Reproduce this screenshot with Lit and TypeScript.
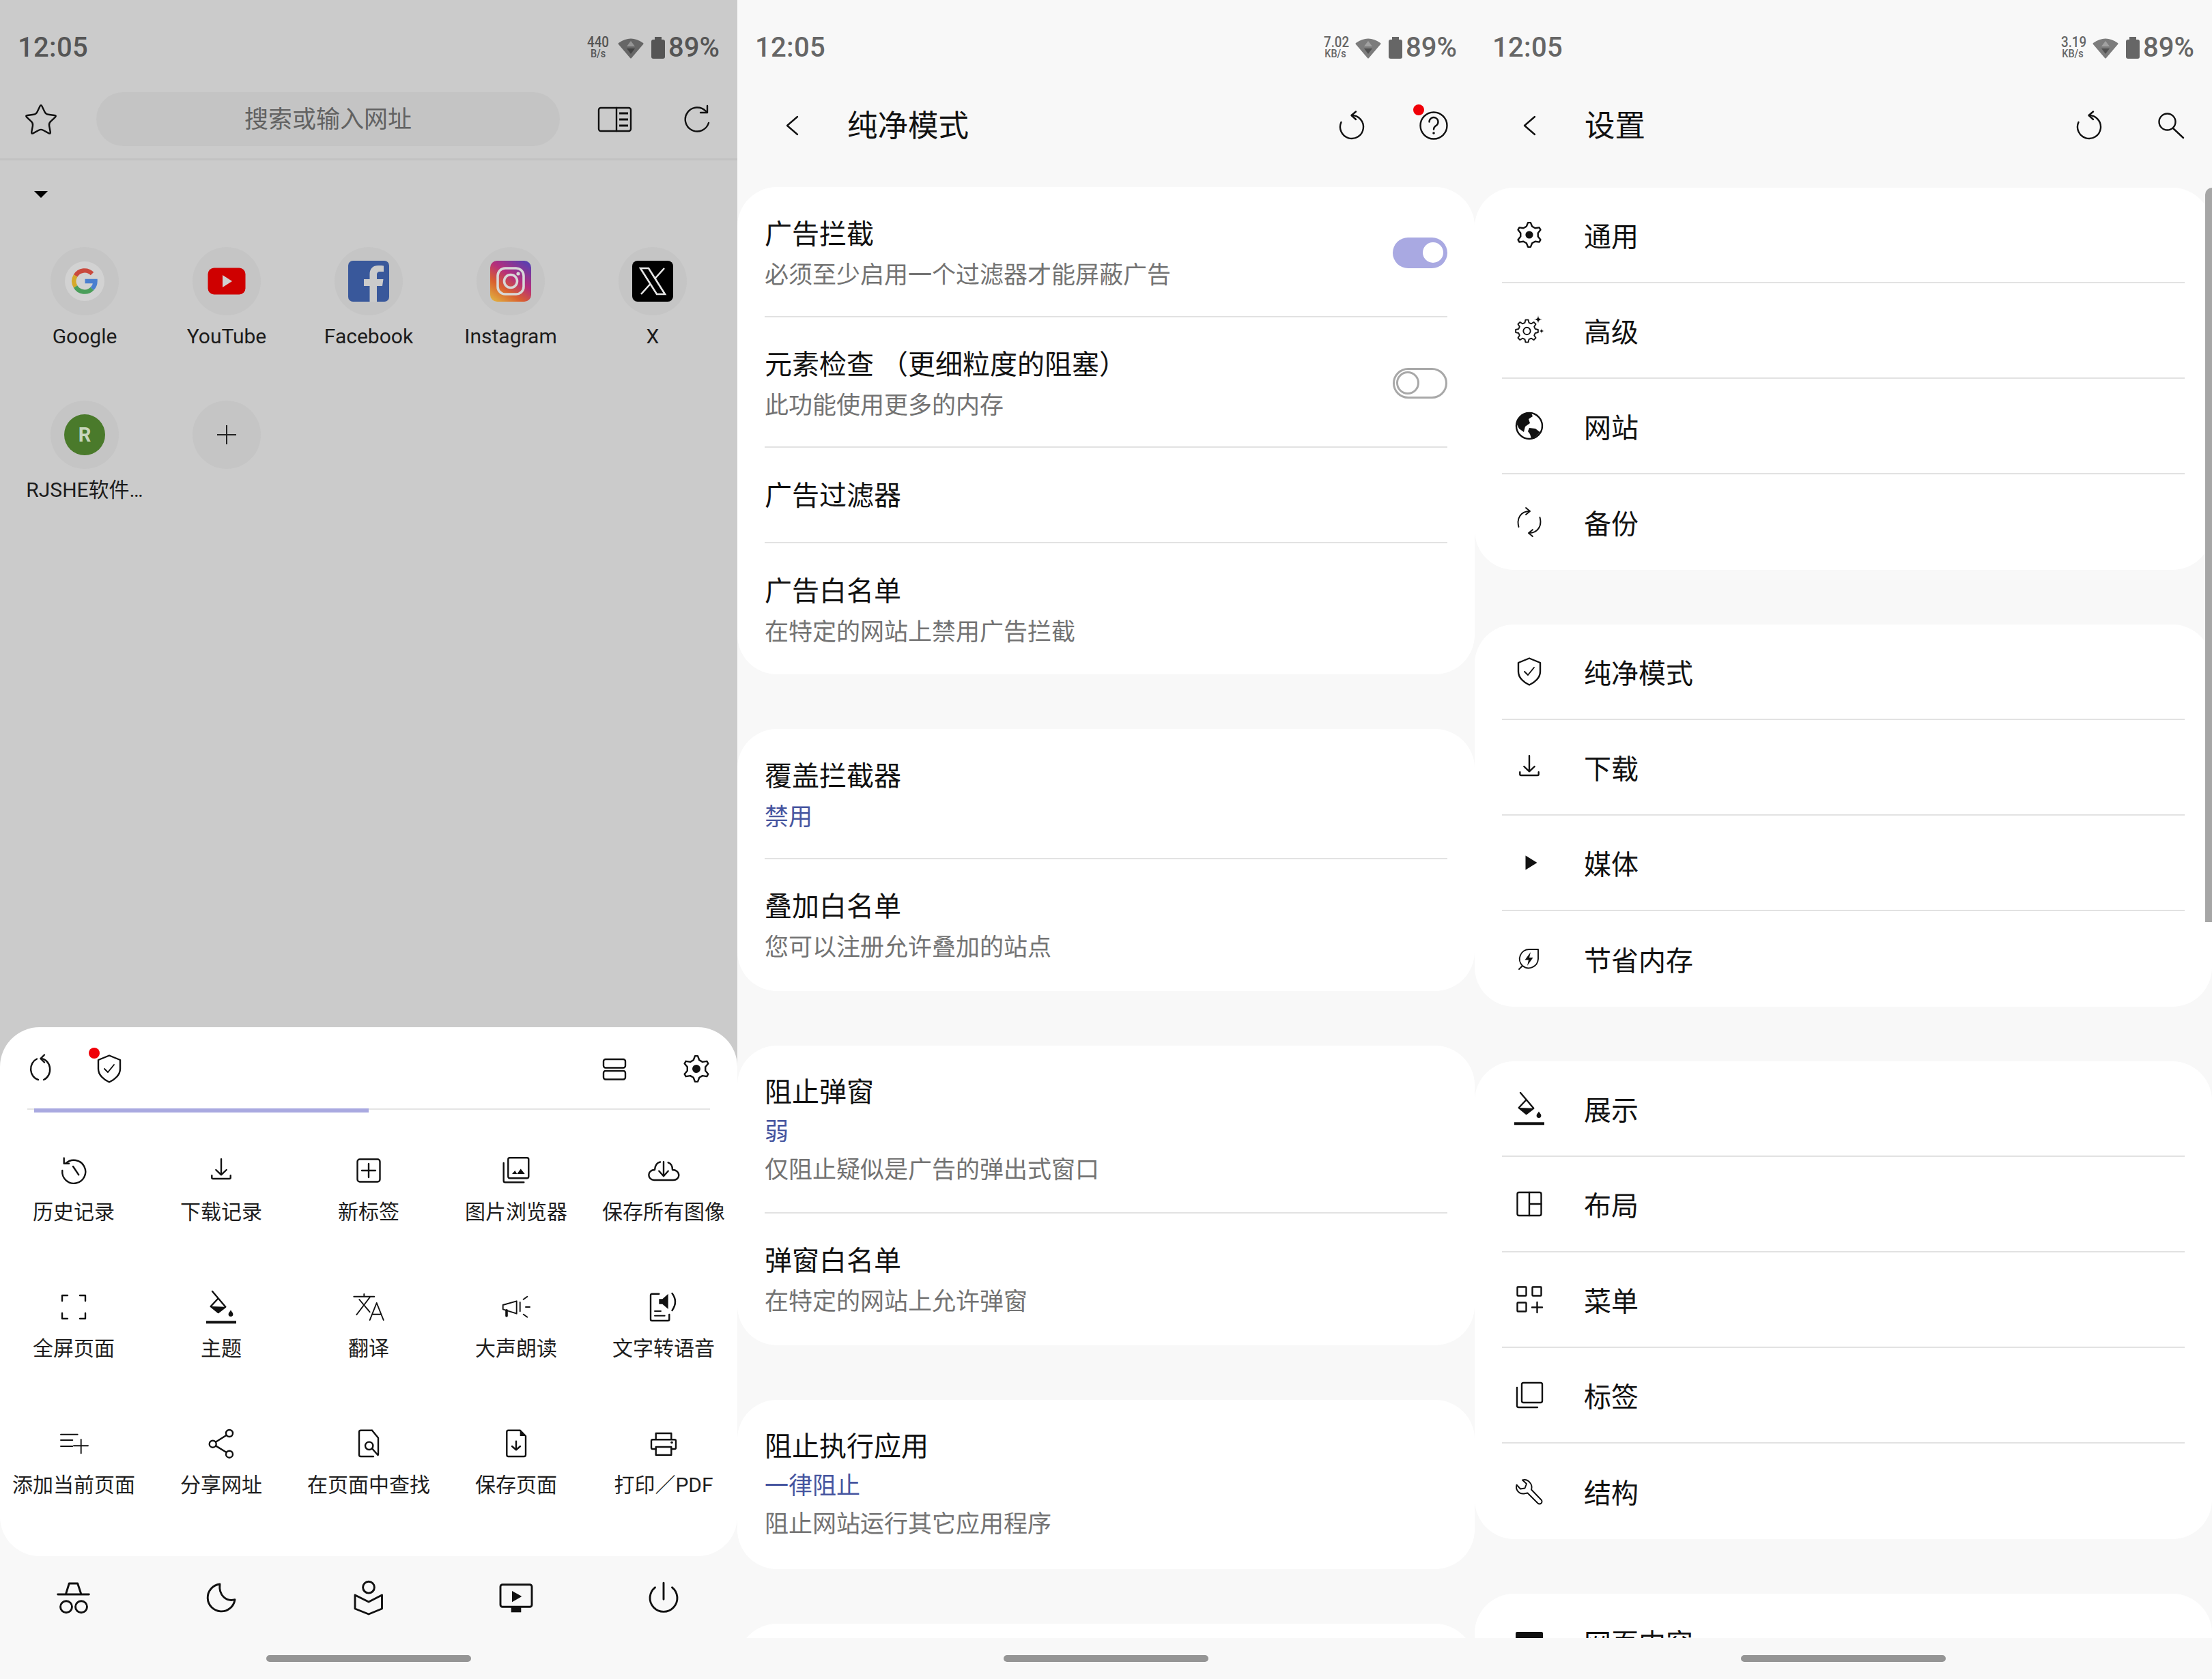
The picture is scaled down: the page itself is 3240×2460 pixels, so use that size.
import { LitElement, css, html, svg, TemplateResult } from 'lit';
import { customElement } from 'lit/decorators.js';

// polygon points, used for the gears and the star
function gearPath(cx: number, cy: number, R: number, r: number, n: number, tip = 0.36, base = 0.66): string {
  const pts: string[] = [];
  const p = (rad: number, a: number) => `${(cx + rad * Math.cos(a)).toFixed(2)} ${(cy + rad * Math.sin(a)).toFixed(2)}`;
  for (let i = 0; i < n; i++) {
    const a = (i * 2 * Math.PI) / n - Math.PI / 2;
    const u = Math.PI / n;
    pts.push(p(r, a - u * base), p(R, a - u * tip), p(R, a + u * tip), p(r, a + u * base));
  }
  return 'M' + pts.join('L') + 'Z';
}

function starPath(cx: number, cy: number, R: number, r: number, corner: number): string {
  const pts: [number, number][] = [];
  for (let i = 0; i < 10; i++) {
    const a = (i * Math.PI) / 5 - Math.PI / 2;
    const rad = i % 2 ? r : R;
    pts.push([cx + rad * Math.cos(a), cy + rad * Math.sin(a)]);
  }
  let d = '';
  pts.forEach((pt, i) => {
    const prev = pts[(i + 9) % 10];
    const next = pts[(i + 1) % 10];
    const toward = (from: [number, number], to: [number, number]) => {
      const dx = to[0] - from[0];
      const dy = to[1] - from[1];
      const len = Math.hypot(dx, dy);
      return [from[0] + (dx / len) * corner, from[1] + (dy / len) * corner];
    };
    const a = toward(pt, prev);
    const b = toward(pt, next);
    d += `${i ? 'L' : 'M'}${a[0].toFixed(2)} ${a[1].toFixed(2)}Q${pt[0].toFixed(2)} ${pt[1].toFixed(2)} ${b[0].toFixed(2)} ${b[1].toFixed(2)}`;
  });
  return d + 'Z';
}

const spark = (x: number, y: number, s: number) =>
  `M${x} ${y - s}Q${x} ${y} ${x + s} ${y}Q${x} ${y} ${x} ${y + s}Q${x} ${y} ${x - s} ${y}Q${x} ${y} ${x} ${y - s}Z`;

const paints = svg`
  <path d="M11 1L30.3 23.7M19.7 11.3L30.3 23.7L19.7 32L8.7 23Z"/>
  <path class="f" d="M8.7 23L30.3 23.7L19.7 32Z"/>
  <path class="f" d="M38 28.5C36.5 31 34.6 32.5 34.6 34.6A3.4 3.4 0 0 0 41.4 34.6C41.4 32.5 39.5 31 38 28.5Z"/>
  <path class="f" d="M2 44.3H46V48.3H2Z"/>`;

const shield = svg`
  <path d="M24 4.5L40 11V24C40 33 32 40 24 43.5C16 40 8 33 8 24V11Z"/>
  <path class="thin" d="M17 24L22 29L31 18"/>`;

const download = svg`
  <path d="M24 7.3V30.3M16.3 23L24 30.3L31.7 23M10.3 31.3V34.5Q10.3 36 12 36H36Q37.7 36 37.7 34.5V31.3"/>`;

const paths: Record<string, TemplateResult> = {
  back: svg`<path d="M32 11L17 24L32 37"/>`,
  reset: svg`<path d="M8.5 19A17 17 0 1 0 24 9"/><path d="M30 3.5L23.5 9L30 15"/>`,
  menuReload: svg`<path d="M18 9.5A14 16 0 0 0 20 40"/><path d="M24 9A14 16 0 0 1 28 40"/><path d="M29 3.5L23.5 9L29 14.5"/>`,
  help: svg`<circle cx="24" cy="24" r="19.5"/><path d="M17.5 18.5A6.5 6.5 0 1 1 27.8 23.8C25.2 25.4 24 26.6 24 29.5"/><circle class="f" cx="24" cy="35" r="1.8"/>`,
  search: svg`<circle cx="18.5" cy="18.5" r="12"/><path d="M27 28L42 42"/>`,
  star: svg`<path d=${starPath(24, 26, 24.5, 12, 3.6)}/>`,
  reader: svg`<rect x="1" y="7" width="47" height="34" rx="3"/><path d="M27 7V41"/><path class="bar" d="M31 15H44M31 24H44M31 33H44"/>`,
  refresh: svg`<path d="M41 29A17.5 17.5 0 1 1 37 12"/><path d="M39 4V14H29"/>`,
  layout2: svg`<rect x="8" y="10" width="32" height="12.5" rx="3"/><rect x="8" y="27" width="32" height="12.5" rx="3"/>`,
  gear: svg`<path d=${gearPath(24, 24, 19, 13.5, 6, 0.2, 0.62)}/><circle class="f" cx="24" cy="24" r="6"/>`,
  gearSmall: svg`<path d=${gearPath(24, 24, 18, 13, 6, 0.2, 0.62)}/><circle class="f" cx="24" cy="24" r="5.6"/>`,
  gearSpark: svg`<path class="thin" d=${gearPath(20.5, 25, 16.5, 12.5, 8, 0.32, 0.62)}/><circle class="thin" cx="20.5" cy="25" r="5.2"/><path class="f" d=${spark(37, 8, 6)}/><path class="f" d=${spark(42, 25, 4)}/>`,
  globe: svg`<circle cx="24" cy="24" r="19"/>
    <path class="f" d="M11 10Q17 5 27 5.5L29 10L23 14L25 20L18 25L16 33L9 28L6 22Q6 15 11 10Z"/>
    <path class="f" d="M24 27L33 28L39.5 33Q35 40 27 42.5L25 36L22 32Z"/>`,
  sync: svg`<path class="thin" d="M8.5 31C5 18 12 8 24.5 8"/><path class="thin" d="M19 3L25 8L19 13"/><path class="thin" d="M39.5 17C43 30 36 40 23.5 40"/><path class="thin" d="M29 35L23 40L29 45"/>`,
  shield,
  download,
  play: svg`<path class="f" d="M18.5 13.5L35.5 24L18.5 34.5Z"/>`,
  leaf: svg`<path class="thin" d="M14 34A14 14 0 0 1 24 10H37V24A14 14 0 0 1 14 34L9 39"/><path class="f" d="M26 14L17.5 25.5H23L21 34L29.5 22H24Z"/>`,
  paint: paints,
  split: svg`<rect x="6.5" y="7" width="35" height="34" rx="2.5"/><path d="M24 7V41M24 24H41.5"/>`,
  grid: svg`<rect x="6.5" y="5.5" width="13" height="13" rx="1"/><rect x="28.5" y="5.5" width="13" height="13" rx="1"/><rect x="6.5" y="28.5" width="13" height="13" rx="1"/><path d="M28 35.5H43M35.5 28V43"/>`,
  tabs: svg`<rect x="13" y="6" width="30" height="29" rx="2.5"/><path d="M6 13V39.5Q6 42 8.5 42H36"/>`,
  wrench: svg`<path class="thin" d="M14 7.5L20 13L17.5 19.5L11 20.5L5.5 14.5C3.5 21 8 28 16 27.5L21.5 26.5L36.5 41.5A3.2 3.2 0 0 0 41.5 36.5L27 21.5C29.5 13.5 22 5 14 7.5Z"/>`,
  fragment: svg`<path class="f" d="M6 10H42Q44 10 44 12V44H4V12Q4 10 6 10Z"/>`,
  history: svg`<path d="M12.3 13.7A17 17 0 1 1 7.3 24"/><path d="M9.7 5.7V13.7H17"/><path d="M23 18L31.3 30.3"/>`,
  plusBox: svg`<rect x="7.5" y="7.5" width="33" height="33" rx="3.5"/><path d="M14 24H34M24 14V34"/>`,
  images: svg`<rect x="12.3" y="5.3" width="30" height="30" rx="2.5"/><path d="M5.7 13V39Q5.7 41.3 8 41.3H35.3"/><path class="f" d="M18 29L22.3 24L25.3 29ZM25.3 29L30.7 21.6L36.7 29Z"/>`,
  cloud: svg`<path d="M19 11.5C14 12.5 11.5 17 11 23C6 23 2.3 26 2.3 30.5C2.3 35 6 38 10 38H38C43 38 46.3 35 46.3 31C46.3 26 42 23 37 23C37 18 35 13.5 30.7 12.3"/><path d="M24 11.3V32.3M17.3 24.7L24 32.3L30.7 24.7"/>`,
  full: svg`<path d="M7 15V7H15M33 7H41V15M41 33V41H33M15 41H7V33"/>`,
  translate: svg`<path class="thin" d="M2.3 8.7H32.3M17.3 5V8.7M25.7 9.7L6.3 35.3M10.3 13L25.7 31.3M25.7 43L35.7 18L45.7 43M29 34.7H41.7"/>`,
  megaphone: svg`<path class="thin" d="M4.7 21L24.7 15.3V33.7L4.7 27.3Z"/><path class="handle" d="M10 28.7V37"/><path class="thin" d="M29.7 17V30.3M38 24H44M34.7 12.7L40.3 8.7M34.7 34.7L40.3 38.7"/>`,
  tts: svg`<path d="M17.3 4.7H7Q5 4.7 5 7V42Q5 44 7 44H30.5Q32.3 44 32.3 42V35"/><path class="thin" d="M11 30H20M11 36.7H25.7"/><path class="f" d="M17.3 12.3H22.3L30.7 4.7V27L22.3 19.7H17.3Z"/><path d="M36.5 4Q45.5 16 36.5 29"/>`,
  addList: svg`<path class="thin" d="M5 10.7H29.7M5 19H22.3M5 28H22.3M24 27.3H45M34.7 18V38.3"/>`,
  share: svg`<circle cx="36" cy="9" r="5"/><circle cx="11.7" cy="24.7" r="5"/><circle cx="36" cy="39.7" r="5"/><path d="M31.8 11.8L16 21.8M16 27.4L31.8 37"/>`,
  findDoc: svg`<path d="M29 4.7H12.5Q10 4.7 10 7V40.5Q10 43 12.5 43H31M29 4.7L38 15.7V40"/><circle cx="24.7" cy="27.3" r="5.7"/><path d="M29 31.3L37.5 41"/>`,
  saveDoc: svg`<path d="M29.7 4.7H12.5Q10.3 4.7 10.3 7V40.5Q10.3 43 12.5 43H35.5Q38 43 38 40.5V13Z"/><path class="f" d="M29.7 4.7L38 13H29.7Z"/><path d="M24 20.7V33.3M18 28L24 33.3L30 28"/>`,
  print: svg`<path d="M12.7 18.3V9H35.3V18.3M12.7 32H8Q6 32 6 30V20Q6 18.3 8 18.3H40Q42 18.3 42 20V30Q42 32 40 32H35.3"/><rect x="12.7" y="29" width="22.6" height="11.7"/><circle class="f" cx="36" cy="22.5" r="1.8"/>`,
  incognito: svg`<path class="b3" d="M0.7 20H46.3M12.3 20L17.3 4H29.7L35 20"/><circle class="b3" cx="13" cy="38.3" r="8.5"/><circle class="b3" cx="35" cy="38.3" r="8.5"/>`,
  moon: svg`<path class="b3" d="M22 5A20 20 0 1 0 44 27.7C32 31 20 22 22 5Z"/>`,
  bookPerson: svg`<circle class="b3" cx="24" cy="9.7" r="8.4"/><path class="b3" d="M4 21L24 31L43.5 21V41L24 49L4 41Z"/>`,
  tv: svg`<rect class="b3" x="1" y="5.7" width="46" height="32.6" rx="3"/><path class="f" d="M18 15L32.3 23L18 31.3Z"/><path class="f" d="M16.7 39H31.3V46.3H16.7Z"/>`,
  power: svg`<path class="b3" d="M24 3.3V27.3M11.5 9.8A20 20 0 1 0 36.5 9.8"/>`,
};

const icon = (name: string) => html`<svg class="i" viewBox="0 0 48 48">${paths[name]}</svg>`;

const shortcuts = [
  { label: 'Google', logo: svg`
      <circle cx="30" cy="30" r="29" fill="#d2d2d2"/>
      <g fill="none" stroke-width="6.4">
        <path stroke="#c9493d" d="M16.6 22A15.5 15.5 0 0 1 41 19"/>
        <path stroke="#d5a92a" d="M16.6 22A15.5 15.5 0 0 0 16.6 38"/>
        <path stroke="#4a9e5a" d="M16.6 38A15.5 15.5 0 0 0 41 41"/>
        <path stroke="#4a7fd0" d="M41 41A15.5 15.5 0 0 0 45.5 30H30.5"/>
      </g>` },
  { label: 'YouTube', logo: svg`
      <rect x="2.500" y="10.500" width="55" height="39" rx="9" fill="#cf0000"/>
      <path d="M24 21L38 30L24 39Z" fill="#d0d0d0"/>` },
  { label: 'Facebook', logo: svg`
      <rect width="60" height="60" rx="7" fill="#39589b"/>
      <path fill="#cbcbcb" d="M42 60V37H50L51.500 27H42V21C42 18 43 16 47 16H52V7.500C50 7 47 7 44 7C36.500 7 31.500 11 31.500 20V27H23V37H31.500V60Z"/>` },
  { label: 'Instagram', logo: svg`
      <defs><linearGradient id="ig" x1="0.15" y1="1" x2="0.85" y2="0">
        <stop offset="0" stop-color="#e0a93f"/><stop offset="0.3" stop-color="#d9602f"/>
        <stop offset="0.6" stop-color="#b52e7c"/><stop offset="1" stop-color="#5a3fb0"/>
      </linearGradient></defs>
      <rect width="60" height="60" rx="10" fill="url(#ig)"/>
      <g fill="none" stroke="#d8d8d8" stroke-width="3.6">
        <rect x="11" y="11" width="38" height="38" rx="11"/><circle cx="30" cy="30" r="9.500"/>
      </g>
      <circle cx="41" cy="19" r="2.600" fill="#d8d8d8"/>` },
  { label: 'X', logo: svg`
      <rect width="60" height="60" rx="8" fill="#000"/>
      <g fill="none" stroke="#e6e6e6" stroke-width="2.600">
        <path d="M12 11H24L48 49H36Z"/><path d="M47 11L33 26.500M27 33.500L13 49"/>
      </g>` },
  { label: 'RJSHE软件…', letter: 'R' },
  { label: '', plus: true },
];

const menuItems: [string, string][] = [
  ['history', '历史记录'], ['download', '下载记录'], ['plusBox', '新标签'], ['images', '图片浏览器'], ['cloud', '保存所有图像'],
  ['full', '全屏页面'], ['paint', '主题'], ['translate', '翻译'], ['megaphone', '大声朗读'], ['tts', '文字转语音'],
  ['addList', '添加当前页面'], ['share', '分享网址'], ['findDoc', '在页面中查找'], ['saveDoc', '保存页面'], ['print', '打印／PDF'],
];

interface Pref { t: string; v?: string; s?: string; on?: boolean }

const prefCards: Pref[][] = [
  [
    { t: '广告拦截', s: '必须至少启用一个过滤器才能屏蔽广告', on: true },
    { t: '元素检查 （更细粒度的阻塞）', s: '此功能使用更多的内存', on: false },
    { t: '广告过滤器' },
    { t: '广告白名单', s: '在特定的网站上禁用广告拦截' },
  ],
  [
    { t: '覆盖拦截器', v: '禁用' },
    { t: '叠加白名单', s: '您可以注册允许叠加的站点' },
  ],
  [
    { t: '阻止弹窗', v: '弱', s: '仅阻止疑似是广告的弹出式窗口' },
    { t: '弹窗白名单', s: '在特定的网站上允许弹窗' },
  ],
  [{ t: '阻止执行应用', v: '一律阻止', s: '阻止网站运行其它应用程序' }],
];

const settingCards: [string, string][][] = [
  [['gearSmall', '通用'], ['gearSpark', '高级'], ['globe', '网站'], ['sync', '备份']],
  [['shield', '纯净模式'], ['download', '下载'], ['play', '媒体'], ['leaf', '节省内存']],
  [['paint', '展示'], ['split', '布局'], ['grid', '菜单'], ['tabs', '标签'], ['wrench', '结构']],
  [['fragment', '网页内容']],
];

@customElement('app-root')
export class AppRoot extends LitElement {
  static override styles = css`
    :host {
      display: flex;
      width: 3240px;
      height: 2460px;
      overflow: hidden;
      font-family: Roboto, "Noto Sans CJK SC", sans-serif;
      color: #111;
    }
    .panel {
      position: relative;
      display: flex;
      flex-direction: column;
      width: 1080px;
      height: 2460px;
      flex: none;
      background: #f8f8f8;
      overflow: hidden;
    }
    .panel.dim {
      background: #cbcbcb;
    }

    .i {
      display: block;
      flex: none;
      width: 48px;
      height: 48px;
      overflow: visible;
      fill: none;
      stroke: #111;
      stroke-width: 2.4;
      stroke-linecap: round;
      stroke-linejoin: round;
    }
    .i .f {
      fill: #111;
      stroke: none;
    }
    .i .thin {
      stroke-width: 1.9;
    }
    .i .handle {
      stroke-width: 3.6;
    }
    .i .bar {
      stroke-width: 3;
      stroke-linecap: butt;
    }
    .i .b3 {
      stroke-width: 2.9;
    }
    .badged {
      position: relative;
    }
    .dot {
      position: absolute;
      left: -6px;
      top: -7px;
      width: 16px;
      height: 16px;
      border-radius: 50%;
      background: #f00008;
    }

    /* status bar */
    .status {
      display: flex;
      align-items: center;
      height: 138px;
      flex: none;
      padding: 2px 26px 0;
      box-sizing: border-box;
      color: #666;
    }
    .dim .status {
      height: 135px;
      padding-top: 5px;
      color: #555;
    }
    .time,
    .pct {
      font-size: 40px;
      line-height: 48px;
      font-weight: 500;
    }
    .time {
      letter-spacing: 0.3px;
    }
    .spacer {
      flex: 1;
    }
    .speed {
      width: 40px;
      margin-right: 9px;
      text-align: center;
      font-weight: 500;
    }
    .speed b {
      display: block;
      font-weight: 500;
      font-size: 22px;
      line-height: 17px;
      transform: scaleX(0.85);
    }
    .speed span {
      display: block;
      font-size: 17px;
      line-height: 17px;
      transform: scaleX(0.85);
    }
    .wifi {
      display: block;
      width: 38px;
      height: 32px;
      margin-right: 11px;
    }
    .batt {
      position: relative;
      width: 20px;
      height: 28px;
      margin: 4px 5px 0 0;
      border-radius: 3px;
      background: currentColor;
    }
    .batt::before {
      content: '';
      position: absolute;
      left: 5px;
      top: -4px;
      width: 10px;
      height: 4px;
      background: currentColor;
    }

    /* browser toolbar */
    .toolbar {
      display: flex;
      align-items: center;
      flex: none;
      padding: 0 35px 18px 36px;
      border-bottom: 3px solid #c2c2c2;
    }
    .pill {
      width: 679px;
      height: 79px;
      margin: 0 56px 0 57px;
      border-radius: 40px;
      background: #c4c4c4;
      color: #626262;
      font-size: 35px;
      line-height: 82px;
      text-align: center;
    }
    .toolbar .gap {
      width: 73px;
    }
    .caret {
      width: 0;
      height: 0;
      margin: 45px 0 72px 50px;
      border-style: solid;
      border-width: 10px 10px 0;
      border-color: #000 transparent transparent;
    }
    .tiles {
      display: grid;
      grid-template-columns: repeat(5, 208px);
      row-gap: 74px;
      padding-left: 20px;
    }
    .tile {
      display: flex;
      flex-direction: column;
      align-items: center;
    }
    .disc {
      display: flex;
      align-items: center;
      justify-content: center;
      width: 100px;
      height: 100px;
      border-radius: 50%;
      background: #c5c5c5;
    }
    .disc svg {
      display: block;
      width: 60px;
      height: 60px;
    }
    .letter {
      width: 60px;
      height: 60px;
      border-radius: 50%;
      background: #4a7a2b;
      color: #c8d6bc;
      font-size: 29px;
      font-weight: 700;
      line-height: 60px;
      text-align: center;
    }
    .plus {
      position: relative;
      width: 28px;
      height: 28px;
      background:
        linear-gradient(#222, #222) center / 100% 2.4px no-repeat,
        linear-gradient(#222, #222) center / 2.4px 100% no-repeat;
    }
    .tile label {
      margin-top: 11px;
      height: 40px;
      font-size: 30px;
      line-height: 40px;
      color: #1c1c1c;
      white-space: nowrap;
    }

    /* bottom sheet */
    .sheet {
      margin-top: auto;
      flex: none;
      background: linear-gradient(#cbcbcb 50%, #f8f8f8 50%);
    }
    .menu {
      height: 775px;
      border-radius: 58px;
      background: #fff;
    }
    .menu-head {
      display: flex;
      align-items: center;
      height: 119px;
      padding: 2px 36px 0;
      box-sizing: border-box;
    }
    .menu-head .g52 {
      width: 52px;
    }
    .menu-head .g72 {
      width: 72px;
    }
    .track {
      position: relative;
      height: 2px;
      margin: 0 40px;
      background: #e4e4e4;
    }
    .track i {
      position: absolute;
      left: 10px;
      top: 0;
      width: 490px;
      height: 6px;
      background: #a9a9e0;
    }
    .menu-grid {
      display: grid;
      grid-template-columns: repeat(5, 216px);
      row-gap: 95px;
      padding-top: 65px;
    }
    .cell {
      display: flex;
      flex-direction: column;
      align-items: center;
    }
    .cell span {
      margin-top: 17px;
      font-size: 30px;
      line-height: 40px;
      color: #1e1e1e;
      white-space: nowrap;
    }
    .bar-icons {
      display: grid;
      flex: none;
      grid-template-columns: repeat(5, 216px);
      justify-items: center;
      height: 120px;
      padding-top: 36px;
      box-sizing: border-box;
      background: #f8f8f8;
    }
    .home {
      flex: none;
      height: 60px;
      padding-top: 25px;
      box-sizing: border-box;
      background: #f8f8f8;
    }
    .home i {
      display: block;
      width: 300px;
      height: 10px;
      margin: 0 auto;
      border-radius: 5px;
      background: #959595;
    }

    /* settings screens */
    .head {
      display: flex;
      align-items: center;
      flex: none;
      height: 92px;
      padding: 0 36px 0 56px;
    }
    .head h1 {
      flex: 1;
      margin: 2px 0 0 57px;
      font-size: 44.5px;
      font-weight: 400;
      line-height: 60px;
      color: #111;
    }
    .head .g72 {
      width: 72px;
    }
    .list {
      flex: 1;
      min-height: 0;
      overflow: hidden;
      padding-top: 44px;
    }
    .list.settings {
      padding-top: 45px;
    }
    .card {
      margin-bottom: 80px;
      border-radius: 58px;
      background: #fff;
    }
    .card.stub {
      height: 200px;
    }
    .pref {
      display: flex;
      align-items: center;
      margin: 0 40px;
      padding: 41px 0 30px;
      border-bottom: 2px solid #e2e2e2;
    }
    .pref:last-child {
      padding-bottom: 34px;
      border-bottom: 0;
    }
    .pref.three {
      padding: 40px 0 34px;
    }
    .pref.three:last-child {
      padding-bottom: 38px;
    }
    .pref.single {
      height: 140px;
      padding: 4px 0 0;
      box-sizing: border-box;
    }
    .pref.single + .pref {
      padding: 42px 0 32px;
    }
    .pref .txt {
      flex: 1;
    }
    .t {
      font-size: 40px;
      line-height: 58px;
      color: #111;
      white-space: pre;
    }
    .v {
      font-size: 35px;
      line-height: 57px;
      color: #46559f;
    }
    .s {
      font-size: 35px;
      line-height: 58px;
      color: #737373;
    }
    .t + .s,
    .t + .v:last-child {
      margin-top: 2px;
      line-height: 58px;
    }
    .v + .s {
      line-height: 55px;
    }
    .toggle {
      display: flex;
      align-items: center;
      width: 80px;
      height: 45px;
      margin-bottom: 8px;
      padding: 0 6px;
      box-sizing: border-box;
      border-radius: 23px;
      background: #a9a9e2;
      justify-content: flex-end;
    }
    .toggle i {
      display: block;
      width: 30px;
      height: 30px;
      border-radius: 50%;
      background: #fff;
    }
    .toggle.off {
      padding: 0 2px;
      border: 3px solid #a8a8a8;
      background: #fff;
      justify-content: flex-start;
    }
    .toggle.off i {
      width: 34px;
      height: 34px;
      box-sizing: border-box;
      border: 3px solid #a8a8a8;
    }
    .set {
      display: flex;
      align-items: center;
      height: 140px;
      margin: 0 40px;
      padding-left: 16px;
      box-sizing: border-box;
      border-bottom: 2px solid #e2e2e2;
      font-size: 40px;
      color: #111;
    }
    .set:last-child {
      border-bottom: 0;
    }
    .set span {
      margin-left: 56px;
    }
    .scroll {
      position: absolute;
      right: 0;
      top: 275px;
      width: 10px;
      height: 1076px;
      border-top-left-radius: 10px;
      background: #a6a6a6;
    }
  `;

  private statusBar(up: string, unit: string) {
    return html`
      <div class="status">
        <div class="time">12:05</div>
        <div class="spacer"></div>
        <div class="speed"><b>${up}</b><span>${unit}</span></div>
        <svg class="wifi" viewBox="0 0 38 32">
          <path fill="currentColor" opacity="0.85" d="M1 9Q19 -4 37 9Q38 10 37 11L20 31Q19 32 18 31L1 11Q0 10 1 9Z"/>
          <path fill="#cfcfcf" opacity="0.45" d="M19 6L25 14H13Z"/>
          <path fill="#000" opacity="0.35" d="M13 17H25L19 25Z"/>
        </svg>
        <div class="batt"></div>
        <div class="pct">89%</div>
      </div>
    `;
  }

  private homeBar() {
    return html`<div class="home"><i></i></div>`;
  }

  private browserPanel() {
    return html`
      <section class="panel dim">
        ${this.statusBar('440', 'B/s')}
        <div class="toolbar">
          ${icon('star')}
          <div class="pill">搜索或输入网址</div>
          ${icon('reader')}
          <div class="gap"></div>
          ${icon('refresh')}
        </div>
        <div class="caret"></div>
        <div class="tiles">
          ${shortcuts.map(
            (s) => html`
              <div class="tile">
                <div class="disc">
                  ${s.logo ? html`<svg viewBox="0 0 60 60">${s.logo}</svg>` : ''}
                  ${s.letter ? html`<div class="letter">${s.letter}</div>` : ''}
                  ${s.plus ? html`<div class="plus"></div>` : ''}
                </div>
                <label>${s.label}</label>
              </div>
            `,
          )}
        </div>
        <div class="sheet">
          <div class="menu">
            <div class="menu-head">
              ${icon('menuReload')}
              <div class="g52"></div>
              <div class="badged">${icon('shield')}<div class="dot"></div></div>
              <div class="spacer"></div>
              ${icon('layout2')}
              <div class="g72"></div>
              ${icon('gear')}
            </div>
            <div class="track"><i></i></div>
            <div class="menu-grid">
              ${menuItems.map(([ic, label]) => html`<div class="cell">${icon(ic)}<span>${label}</span></div>`)}
            </div>
          </div>
        </div>
        <div class="bar-icons">
          ${['incognito', 'moon', 'bookPerson', 'tv', 'power'].map((n) => icon(n))}
        </div>
        ${this.homeBar()}
      </section>
    `;
  }

  private adblockPanel() {
    return html`
      <section class="panel">
        ${this.statusBar('7.02', 'KB/s')}
        <div class="head">
          ${icon('back')}
          <h1>纯净模式</h1>
          ${icon('reset')}
          <div class="g72"></div>
          <div class="badged">${icon('help')}<div class="dot"></div></div>
        </div>
        <div class="list">
          ${prefCards.map(
            (card) => html`
              <div class="card">
                ${card.map(
                  (p) => html`
                    <div class="pref ${p.v || p.s ? '' : 'single'} ${p.v && p.s ? 'three' : ''}">
                      <div class="txt">
                        <div class="t">${p.t}</div>
                        ${p.v ? html`<div class="v">${p.v}</div>` : ''}
                        ${p.s ? html`<div class="s">${p.s}</div>` : ''}
                      </div>
                      ${p.on === undefined ? '' : html`<div class="toggle ${p.on ? '' : 'off'}"><i></i></div>`}
                    </div>
                  `,
                )}
              </div>
            `,
          )}
          <div class="card stub"></div>
        </div>
        ${this.homeBar()}
      </section>
    `;
  }

  private settingsPanel() {
    return html`
      <section class="panel">
        ${this.statusBar('3.19', 'KB/s')}
        <div class="head">
          ${icon('back')}
          <h1>设置</h1>
          ${icon('reset')}
          <div class="g72"></div>
          ${icon('search')}
        </div>
        <div class="list settings">
          ${settingCards.map(
            (card) => html`
              <div class="card">
                ${card.map(([ic, label]) => html`<div class="set">${icon(ic)}<span>${label}</span></div>`)}
              </div>
            `,
          )}
        </div>
        ${this.homeBar()}
        <div class="scroll"></div>
      </section>
    `;
  }

  override render() {
    return html`${this.browserPanel()}${this.adblockPanel()}${this.settingsPanel()}`;
  }
}
